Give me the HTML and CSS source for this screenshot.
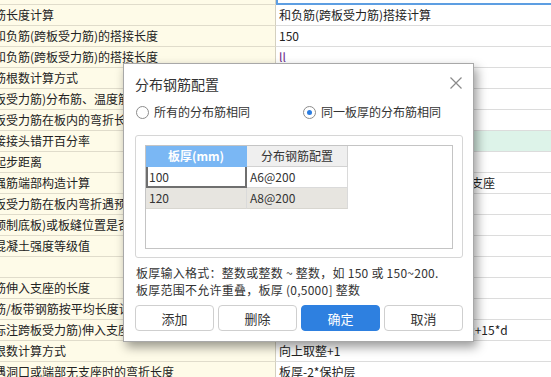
FILE: index.html
```html
<!DOCTYPE html>
<html lang="zh-CN">
<head>
<meta charset="utf-8">
<title>分布钢筋配置</title>
<link rel="stylesheet" href="styles.css">
</head>
<body>
<div class="sheet">
  <div class="row top"><div class="c1"></div><div class="c2 sel"></div></div>
  <div class="row"><div class="c1">筋长度计算</div><div class="c2">和负筋(跨板受力筋)搭接计算</div></div>
  <div class="row"><div class="c1">和负筋(跨板受力筋)的搭接长度</div><div class="c2">150</div></div>
  <div class="row"><div class="c1">和负筋(跨板受力筋)的搭接长度</div><div class="c2"><span class="purple">ll</span></div></div>
  <div class="row"><div class="c1">筋根数计算方式</div><div class="c2"></div></div>
  <div class="row"><div class="c1">板受力筋)分布筋、温度筋</div><div class="c2"></div></div>
  <div class="row"><div class="c1">板受力筋在板内的弯折长度</div><div class="c2"></div></div>
  <div class="row"><div class="c1">接接头错开百分率</div><div class="c2 green"></div></div>
  <div class="row"><div class="c1">起步距离</div><div class="c2"></div></div>
  <div class="row"><div class="c1">强筋端部构造计算</div><div class="c2">按规范计算，端部构造为伸入并锚入支座</div></div>
  <div class="row"><div class="c1">板受力筋在板内弯折遇预制</div><div class="c2"></div></div>
  <div class="row"><div class="c1">预制底板)或板缝位置是否</div><div class="c2"></div></div>
  <div class="row"><div class="c1">混凝土强度等级值</div><div class="c2"></div></div>
  <div class="row"><div class="c1"></div><div class="c2"></div></div>
  <div class="row"><div class="c1">筋伸入支座的长度</div><div class="c2"></div></div>
  <div class="row"><div class="c1">筋/板带钢筋按平均长度计</div><div class="c2"></div></div>
  <div class="row"><div class="c1">标注跨板受力筋)伸入支座</div><div class="c2">能直锚就直锚，否则按公式计算:ha-c+15*d</div></div>
  <div class="row"><div class="c1">根数计算方式</div><div class="c2">向上取整+1</div></div>
  <div class="row"><div class="c1">遇洞口或端部无支座时的弯折长度</div><div class="c2">板厚-2*保护层</div></div>
</div>

<div class="dialog">
  <div class="title-bar">
    <span class="title">分布钢筋配置</span>
    <svg class="close" width="12" height="12" viewBox="0 0 12 12"><path d="M0.5 0.5 L11.5 11.5 M11.5 0.5 L0.5 11.5" stroke="#8a8a8a" stroke-width="1.2" fill="none"/></svg>
  </div>
  <div class="radios">
    <label class="radio first"><span class="circle"></span>所有的分布筋相同</label>
    <label class="radio"><span class="circle on"></span>同一板厚的分布筋相同</label>
  </div>
  <div class="group">
    <div class="grid">
      <div class="gh blue">板厚(mm)</div><div class="gh">分布钢筋配置</div>
      <div class="gc edit">100</div><div class="gc">A6@200</div>
      <div class="gc alt">120</div><div class="gc alt">A8@200</div>
    </div>
  </div>
  <div class="notes">
    <p>板厚输入格式：整数或整数 ~ 整数，如 150 或 150~200.</p>
    <p>板厚范围不允许重叠，板厚 (0,5000] 整数</p>
  </div>
  <div class="buttons">
    <button class="btn">添加</button>
    <button class="btn">删除</button>
    <button class="btn primary">确定</button>
    <button class="btn">取消</button>
  </div>
</div>
</body>
</html>
```
FILE: styles.css
```css
html, body {
  margin: 0;
  padding: 0;
}
body {
  width: 551px;
  height: 377px;
  overflow: hidden;
  position: relative;
  background: #fff;
  font-family: "Noto Sans CJK SC", "Microsoft YaHei", sans-serif;
  font-size: 12px;
  color: #222;
}
.sheet {
  display: flex;
  flex-direction: column;
}
.row {
  display: grid;
  grid-template-columns: 276px 1fr;
  height: 21px;
}
.row.top {
  height: 5px;
}
.c1, .c2 {
  box-sizing: border-box;
  white-space: nowrap;
  overflow: hidden;
  line-height: 20px;
}
.c1 {
  background: #fefbe8;
  border-bottom: 1px solid #e0dccb;
  border-right: 1px solid #d4d0c0;
  text-indent: -6px;
}
.c2 {
  background: #fff;
  border-bottom: 1px solid #dcdcdc;
  padding-left: 3px;
}
.c2.sel {
  border-left: 2px solid #5d9ee2;
  border-bottom: 2px solid #5d9ee2;
}
.c2.green {
  background: #ddf3e9;
}
.purple {
  color: #6c2c8c;
}

.dialog {
  position: absolute;
  left: 123px;
  top: 63px;
  width: 351px;
  height: 279px;
  box-sizing: border-box;
  background: #fff;
  border: 1px solid #a8a8a8;
  box-shadow: 3px 5px 10px rgba(0, 0, 0, 0.4);
  padding: 0 10px 0 11px;
  display: flex;
  flex-direction: column;
  color: #333;
}
.title-bar {
  height: 39px;
  display: flex;
  align-items: center;
  justify-content: space-between;
  padding-right: 1px;
}
.title {
  font-size: 14px;
  line-height: 20px;
  padding-top: 1px;
}
.close {
  display: block;
  margin-top: -1px;
}
.radios {
  display: flex;
  height: 18px;
  align-items: center;
}
.radio {
  display: flex;
  align-items: center;
  line-height: 18px;
}
.radio.first {
  width: 167px;
  padding-left: 1px;
}
.circle {
  width: 13px;
  height: 13px;
  box-sizing: border-box;
  border: 1px solid #8c8c8c;
  border-radius: 50%;
  margin-right: 5px;
  display: flex;
  align-items: center;
  justify-content: center;
  background: #fff;
}
.circle.on::after {
  content: "";
  width: 5px;
  height: 5px;
  border-radius: 50%;
  background: #2b7de1;
}
.group {
  margin-top: 14px;
  height: 123px;
  box-sizing: border-box;
  border: 1px solid #d6d6d6;
  border-radius: 3px;
  padding: 9px;
}
.grid {
  height: 104px;
  box-sizing: border-box;
  border: 1px solid #c4c4c4;
  display: grid;
  grid-template-columns: 101px 101px;
  grid-template-rows: 21px 21px 21px;
  align-content: start;
}
.gh, .gc {
  box-sizing: border-box;
  line-height: 20px;
  white-space: nowrap;
}
.gh {
  background: #efefef;
  text-align: center;
  border-right: 1px solid #d2d2d2;
  border-bottom: 1px solid #d2d2d2;
}
.gh.blue {
  background: #7ab7f4;
  color: #fff;
  font-weight: bold;
  border-right: 1px solid #7ab7f4;
  border-bottom: 1px solid #7ab7f4;
}
.gc {
  padding-left: 3px;
  border-right: 1px solid #dadada;
  border-bottom: 1px solid #dadada;
  background: #fff;
}
.gc.edit {
  border: 2px solid #6f6f6f;
  border-top: 0;
  padding-left: 1px;
  line-height: 19px;
}
.gc.alt {
  background: #e7e5e0;
  border-bottom: 1px solid #d8d6d0;
}
.notes {
  margin-top: 6px;
  padding-left: 1px;
}
.notes p {
  margin: 0;
  line-height: 17px;
  white-space: nowrap;
  letter-spacing: 0.25px;
}
.buttons {
  margin-top: 7px;
  display: grid;
  grid-template-columns: repeat(4, 1fr);
  gap: 4px;
}
.btn {
  height: 26px;
  box-sizing: border-box;
  border: 1px solid #cfcfcf;
  border-radius: 4px;
  background: #fff;
  font-family: "Noto Sans CJK SC", "Microsoft YaHei", sans-serif;
  font-size: 13px;
  color: #333;
  padding: 0;
}
.btn.primary {
  background: #2e80e0;
  border-color: #2e80e0;
  color: #fff;
}
```
